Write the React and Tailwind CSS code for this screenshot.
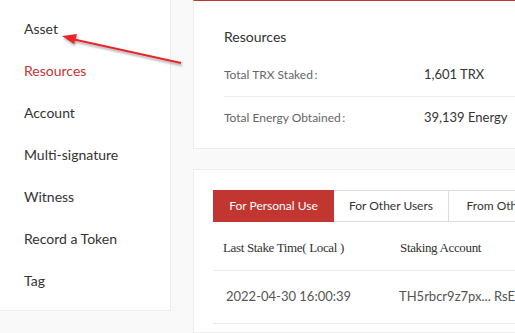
import React from "react";

const menu = ["Asset", "Resources", "Account", "Multi-signature", "Witness", "Record a Token", "Tag"];

const Arrow = () => (
  <svg className="absolute left-0 top-0 pointer-events-none" width="200" height="80" viewBox="0 0 200 80">
    <defs>
      <filter id="sh" x="-20%" y="-50%" width="140%" height="200%">
        <feDropShadow dx="1" dy="2" stdDeviation="1.2" floodColor="#000" floodOpacity="0.35" />
      </filter>
    </defs>
    <g filter="url(#sh)">
      <line x1="181" y1="63" x2="72" y2="39" stroke="#e8262a" strokeWidth="2" />
      <polygon points="62,36 77,34 74,44" fill="#e8262a" />
    </g>
  </svg>
);

export default function App() {
  return (
    <div
      className="relative flex w-[515px] h-[333px] overflow-hidden bg-[#f9f9f9]"
      style={{ fontFamily: "Lato, 'Noto Sans', sans-serif" }}
    >
      {/* Sidebar */}
      <aside className="w-[171px] h-[311px] shrink-0 bg-white border-r border-b border-[#ececec] pt-[7px]">
        {menu.map((m) => (
          <div
            key={m}
            className={`h-[42px] flex items-center pl-6 text-[14px] ${m === "Resources" ? "text-[#c23631]" : "text-[#333]"}`}
          >
            {m}
          </div>
        ))}
      </aside>

      {/* Content */}
      <div className="ml-[22px] w-[600px] shrink-0 flex flex-col gap-[20px]">
        {/* Resources card */}
        <div className="bg-white border border-[#ececec] border-t-[#c23631] pl-[30px] pt-[23px] pb-[9px]">
          <div className="h-[26px] leading-[26px] text-[14px] text-[#333]">Resources</div>
          <div className="mt-[4px] h-[43px] flex items-center border-b border-[#ececec]">
            <span className="w-[200px] text-[12px] text-[#666]">Total TRX Staked{"\u2009"}:</span>
            <span className="text-[13px] text-[#333]">1,601 TRX</span>
          </div>
          <div className="h-[42px] flex items-center">
            <span className="w-[200px] text-[12px] text-[#666]">Total Energy Obtained{"\u2009"}:</span>
            <span className="text-[13px] text-[#333]">39,139 Energy</span>
          </div>
        </div>

        {/* Staking card */}
        <div className="bg-white border border-[#ececec] pl-[19px] pt-[20px] flex-1">
          <div className="flex h-[32px] text-[12px]">
            <div className="w-[121px] flex items-center justify-center bg-[#c23631] text-white">For Personal Use</div>
            <div className="w-[115px] flex items-center justify-center border-y border-r border-[#dddddd] text-[#333]">For Other Users</div>
            <div className="w-[130px] flex items-center justify-center border-y border-r border-[#dddddd] text-[#333]">From Other Users</div>
          </div>
          <div
            className="h-[49px] flex items-center pt-[4px] border-b border-[#ececec] text-[13px] text-[#333] tracking-[-0.35px]"
            style={{ fontFamily: "'Liberation Serif', serif" }}
          >
            <span className="w-[187px] pl-[10px]">Last Stake Time( Local )</span>
            <span>Staking Account</span>
          </div>
          <div className="h-[53px] flex items-center border-b border-[#ececec] text-[13px] text-[#555]">
            <span className="w-[186px] pl-[13px]">2022-04-30 16:00:39</span>
            <span>TH5rbcr9z7px... RsEQqwd</span>
          </div>
        </div>
      </div>

      <Arrow />
    </div>
  );
}
